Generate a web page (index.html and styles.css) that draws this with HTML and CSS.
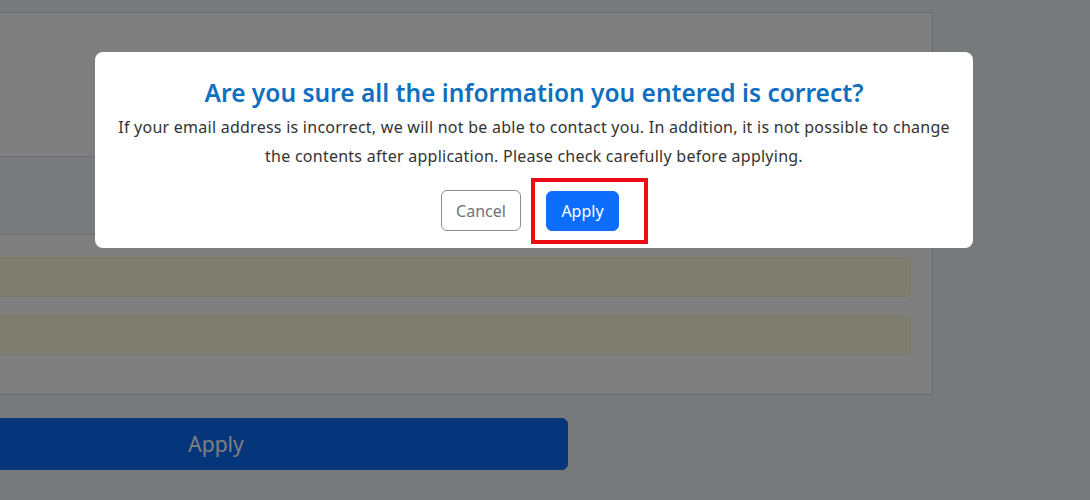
FILE: index.html
```html
<!DOCTYPE html>
<html lang="en">
<head>
<meta charset="utf-8">
<title>Confirm</title>
<link rel="stylesheet" href="styles.css">
</head>
<body>
<div class="page">
  <div class="card">
    <div class="card-top"></div>
    <div class="card-band"></div>
    <div class="card-body">
      <div class="field"></div>
      <div class="field"></div>
    </div>
  </div>
  <button class="big-apply" type="button">Apply</button>
</div>
<div class="overlay"></div>
<div class="modal">
  <h2 class="modal-title">Are you sure all the information you entered is correct?</h2>
  <p class="modal-text">If your email address is incorrect, we will not be able to contact you. In addition, it is not possible to change the contents after application. Please check carefully before applying.</p>
  <div class="modal-actions">
    <button class="btn btn-cancel" type="button">Cancel</button>
    <span class="apply-wrap">
      <button class="btn btn-apply" type="button">Apply</button>
      <span class="highlight"></span>
    </span>
  </div>
</div>
</body>
</html>
```

FILE: styles.css
```css
* { box-sizing: border-box; }
html, body { margin: 0; padding: 0; }
body {
  width: 1090px;
  height: 500px;
  overflow: hidden;
  background: #f1f3f6;
  font-family: "Noto Sans", "Open Sans", sans-serif;
}
.page {
  padding-top: 12px;
}
.card {
  margin-left: -60px;
  width: 993px;
  height: 383px;
  background: #ffffff;
  border: 1px solid #d4d6da;
  display: flex;
  flex-direction: column;
}
.card-top {
  height: 144px;
  border-bottom: 1px solid #dcdde0;
}
.card-band {
  height: 78px;
  background: #f5f6f8;
  border-bottom: 1px solid #dcdde0;
}
.card-body {
  padding: 22px 21px 0 0;
  display: flex;
  flex-direction: column;
  gap: 18px;
}
.field {
  height: 40px;
  background: #fcfcdc;
  border: 1px solid #f0f0d0;
  border-radius: 6px;
}
.big-apply {
  display: block;
  margin: 23px 0 0 -136px;
  width: 704px;
  height: 52px;
  background: #0b6bf7;
  border: 1px solid #0b6bf7;
  border-radius: 6px;
  color: #fff;
  font-family: "Noto Sans", "Open Sans", sans-serif;
  font-size: 21px;
  padding: 0;
}
.overlay {
  position: fixed;
  inset: 0;
  background: rgba(0, 0, 0, 0.5);
}
.modal {
  position: fixed;
  left: 95px;
  top: 52px;
  width: 878px;
  height: 196px;
  background: #fff;
  border-radius: 8px;
  padding: 24px 16px 0;
  text-align: center;
}
.modal-title {
  margin: 0;
  font-size: 24.5px;
  line-height: 34px;
  font-weight: 600;
  color: #0f6fc0;
}
.modal-text {
  margin: 3px auto 0;
  max-width: 840px;
  font-size: 16px;
  letter-spacing: 0.25px;
  line-height: 29px;
  color: #333;
}
.modal-actions {
  margin-top: 19px;
  display: flex;
  justify-content: center;
  gap: 25px;
  padding-right: 8px;
}
.btn {
  height: 41px;
  border-radius: 6px;
  font-family: "Noto Sans", "Open Sans", sans-serif;
  font-size: 16px;
  padding: 0 13px;
}
.btn-cancel {
  width: 80px;
  background: #fff;
  border: 1px solid #8a8f94;
  color: #6c757d;
}
.apply-wrap {
  position: relative;
  display: inline-block;
}
.btn-apply {
  width: 73px;
  height: 40px;
  margin-top: 1px;
  background: #0d6efd;
  border: 1px solid #0d6efd;
  color: #fff;
}
.highlight {
  position: absolute;
  left: -15px;
  top: -12px;
  width: 117px;
  height: 66px;
  border: 4px solid #ec0c14;
}
```
